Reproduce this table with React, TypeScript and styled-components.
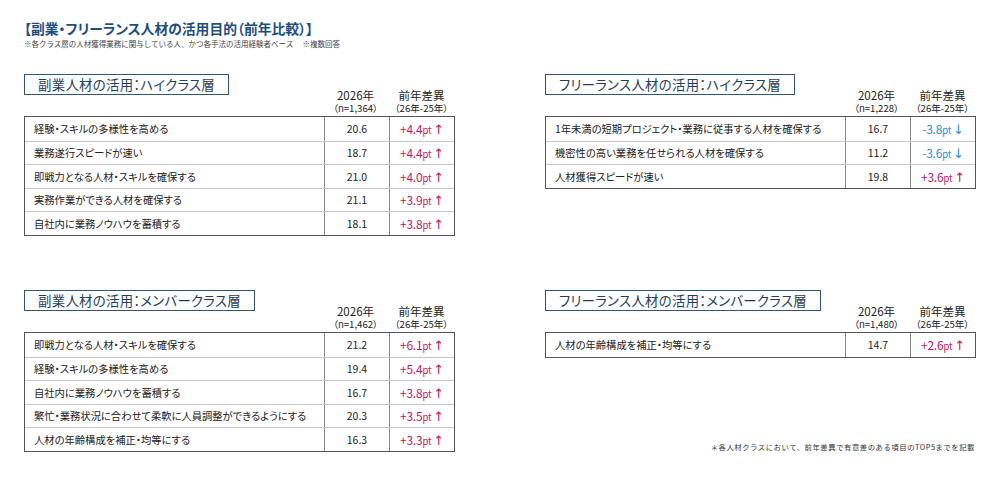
import React from "react";
import styled, { createGlobalStyle } from "styled-components";

const Global = createGlobalStyle`
  html, body { margin: 0; padding: 0; background: #fff; }
  body { font-family: "Noto Sans CJK JP", "Noto Sans", sans-serif; color: #222; }
`;

type Row = { label: string; value: string; diff: string; up: boolean };
type Panel = { title: string; n: string; rows: Row[] };

const panels: Panel[] = [
  {
    title: "副業人材の活用：ハイクラス層",
    n: "（n=1,364）",
    rows: [
      { label: "経験・スキルの多様性を高める", value: "20.6", diff: "+4.4", up: true },
      { label: "業務遂行スピードが速い", value: "18.7", diff: "+4.4", up: true },
      { label: "即戦力となる人材・スキルを確保する", value: "21.0", diff: "+4.0", up: true },
      { label: "実務作業ができる人材を確保する", value: "21.1", diff: "+3.9", up: true },
      { label: "自社内に業務ノウハウを蓄積する", value: "18.1", diff: "+3.8", up: true },
    ],
  },
  {
    title: "フリーランス人材の活用：ハイクラス層",
    n: "（n=1,228）",
    rows: [
      { label: "1年未満の短期プロジェクト・業務に従事する人材を確保する", value: "16.7", diff: "-3.8", up: false },
      { label: "機密性の高い業務を任せられる人材を確保する", value: "11.2", diff: "-3.6", up: false },
      { label: "人材獲得スピードが速い", value: "19.8", diff: "+3.6", up: true },
    ],
  },
  {
    title: "副業人材の活用：メンバークラス層",
    n: "（n=1,462）",
    rows: [
      { label: "即戦力となる人材・スキルを確保する", value: "21.2", diff: "+6.1", up: true },
      { label: "経験・スキルの多様性を高める", value: "19.4", diff: "+5.4", up: true },
      { label: "自社内に業務ノウハウを蓄積する", value: "16.7", diff: "+3.8", up: true },
      { label: "繁忙・業務状況に合わせて柔軟に人員調整ができるようにする", value: "20.3", diff: "+3.5", up: true },
      { label: "人材の年齢構成を補正・均等にする", value: "16.3", diff: "+3.3", up: true },
    ],
  },
  {
    title: "フリーランス人材の活用：メンバークラス層",
    n: "（n=1,480）",
    rows: [
      { label: "人材の年齢構成を補正・均等にする", value: "14.7", diff: "+2.6", up: true },
    ],
  },
];

const Page = styled.div`
  width: 1000px;
  height: 479px;
  box-sizing: border-box;
  padding: 19px 24px 0 24px;
  position: relative;
`;

const MainTitle = styled.h1`
  margin: 0;
  font-size: 13.8px;
  font-weight: 700;
  color: #1d4f7c;
  line-height: 18px;
  font-feature-settings: "palt";
`;

const SubNote = styled.p`
  margin: 2px 0 0 0;
  font-size: 7.5px;
  color: #444;
  line-height: 10px;
`;

const Grid = styled.div`
  display: grid;
  grid-template-columns: 431px 431px;
  grid-template-rows: 216px auto;
  column-gap: 90px;
  margin-top: 25px;
`;

const PanelBox = styled.section``;

const PanelHead = styled.div`
  display: flex;
  align-items: flex-start;
  justify-content: space-between;
`;

const TitleBox = styled.div`
  border: 1.5px solid #2f5676;
  height: 19px;
  box-sizing: content-box;
  padding: 0 13px;
  font-size: 13.4px;
  line-height: 19px;
  color: #1f3d5c;
  letter-spacing: 0.3px;
  font-feature-settings: "palt";
`;

const ColHeads = styled.div`
  display: flex;
  margin-top: 14px;
`;

const ColHead = styled.div<{ $w: number }>`
  width: ${(p) => p.$w}px;
  text-align: center;
  color: #222;
  white-space: nowrap;
`;

const ColMain = styled.div`
  font-size: 11.5px;
  line-height: 14px;
`;

const ColSub = styled.div`
  font-size: 9.6px;
  line-height: 12px;
  font-feature-settings: "palt";
`;

const Table = styled.div`
  margin-top: 2px;
  border: 1px solid #555;
`;

const TRow = styled.div`
  display: grid;
  grid-template-columns: 299px 65px 65px;
  height: 23.5px;
  box-sizing: border-box;
  & + & {
    border-top: 1.5px solid #c8c8c8;
  }
`;

const Cell = styled.div<{ $align?: string }>`
  display: flex;
  align-items: center;
  justify-content: ${(p) => p.$align || "center"};
  font-size: 10.5px;
  color: #222;
  white-space: nowrap;
  & + & {
    border-left: 1px solid #8a8a8a;
  }
`;

const Label = styled(Cell)`
  padding-left: 9px;
  font-size: 10.3px;
  font-feature-settings: "palt";
`;

const Diff = styled.span<{ $up: boolean }>`
  color: ${(p) => (p.$up ? "#c2185b" : "#2d8ccb")};
  font-size: 12px;
  display: inline-flex;
  align-items: baseline;
  letter-spacing: -0.2px;
`;

const Unit = styled.span`
  font-size: 9.5px;
  margin-right: 2px;
`;

const Arrow = styled.span`
  font-size: 13px;
  font-family: "DejaVu Sans", sans-serif;
`;

const Footnote = styled.div`
  position: absolute;
  right: 25px;
  top: 441px;
  font-size: 7.4px;
  color: #333;
  letter-spacing: 0.5px;
`;

function PanelView({ p }: { p: Panel }) {
  return (
    <PanelBox>
      <PanelHead>
        <TitleBox>{p.title}</TitleBox>
        <ColHeads>
          <ColHead $w={65}>
            <ColMain>2026年</ColMain>
            <ColSub>{p.n}</ColSub>
          </ColHead>
          <ColHead $w={67}>
            <ColMain>前年差異</ColMain>
            <ColSub>（26年-25年）</ColSub>
          </ColHead>
        </ColHeads>
      </PanelHead>
      <Table>
        {p.rows.map((r, i) => (
          <TRow key={i}>
            <Label $align="flex-start">{r.label}</Label>
            <Cell>{r.value}</Cell>
            <Cell>
              <Diff $up={r.up}>
                {r.diff}
                <Unit>pt</Unit>
                <Arrow>{r.up ? "↑" : "↓"}</Arrow>
              </Diff>
            </Cell>
          </TRow>
        ))}
      </Table>
    </PanelBox>
  );
}

export default function App() {
  return (
    <Page>
      <Global />
      <MainTitle>【副業・フリーランス人材の活用目的（前年比較）】</MainTitle>
      <SubNote>※各クラス層の人材獲得業務に関与している人、かつ各手法の活用経験者ベース　 ※複数回答</SubNote>
      <Grid>
        {panels.map((p, i) => (
          <PanelView key={i} p={p} />
        ))}
      </Grid>
      <Footnote>＊各人材クラスにおいて、前年差異で有意差のある項目のTOP5までを記載</Footnote>
    </Page>
  );
}
